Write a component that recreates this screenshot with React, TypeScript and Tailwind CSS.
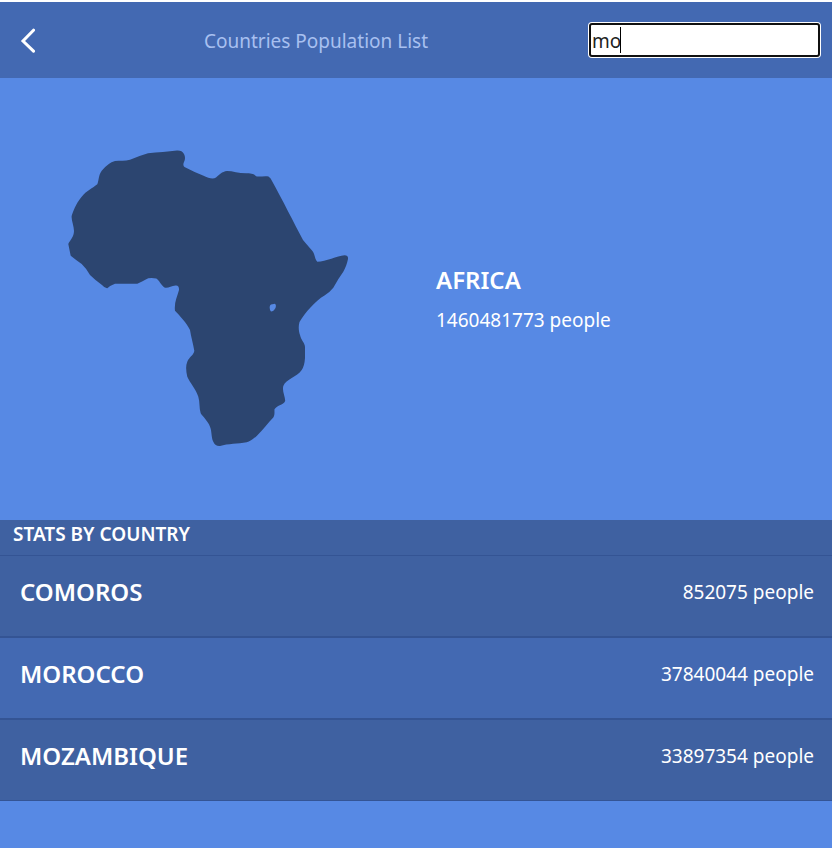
import { useState } from "react";

const countries = [
  { name: "COMOROS", population: 852075 },
  { name: "MOROCCO", population: 37840044 },
  { name: "MOZAMBIQUE", population: 33897354 },
];

function BackIcon() {
  return (
    <svg width="16" height="26" viewBox="0 0 16 26" fill="none" stroke="white" strokeWidth="3" strokeLinecap="round" strokeLinejoin="miter" aria-hidden="true">
      <path d="M13.5 3.200L3 14L13.5 24.200" />
    </svg>
  );
}

function AfricaMap() {
  return (
    <svg className="w-[281px] max-w-full" viewBox="68 150 281 297" role="img" aria-label="Map of Africa">
      <path
        fill="#2c4570"
        fillRule="evenodd"
        d="M148 153.3C158 152 168 152 177 150.6Q182 150.3 184 154Q186 158 184 162Q182.500 165 184.500 167Q194 172 203 175.500Q212 180 216 177.500C219 175 222 171.500 227 171C233 171 239 173.500 247 173.300C252 173.500 254 174 256 176.300C260 177 265 175.500 268.500 176.500Q271 178 272 181C282 199 294 223 303 240C307 245 311 249 313 251.700C315 255 315 260 317.300 261.700C326 261.500 337 256 344.500 255.200Q348.500 255.300 348 259C347 264 345.500 268 343.300 271.700Q338 279 333.300 287.700Q330 292 324.500 295.500C315 301 305 313 299.500 322C298 327 299 332 300 335C301 340 305 343 305 347V358Q304.500 366 301.700 370C297 377 286 379 283.300 386C282 391 285 396 285.200 400.700C284 405 277 405 274.500 409.300C274.300 412 275 415 273.300 417.500C268 423 263 430 256.700 436Q251 441 246.700 442.300C238 444 228 443.500 220 446Q215.500 446.500 213.300 441.700C211 437 212 431 210 426.700C208 421 203 417 200.700 413.300C199 408 200 402 198.300 396.700C196 389 190 383 187.300 376.700C186 371 185.500 366 187.300 361.700C189 357 194 355 194.300 350.700C193 343 191 337 190 330C187 323 179 315 175 310.700C174 303 177 297 179 290Q179.300 285 175.500 285.500C171 286 168 288.500 164.500 287.500C161 285 159 280 156.300 278.500Q152 277.600 148.300 278.300C144 280 141 282.500 137.300 283.700H115Q110 285.500 107.300 288.300Q105 288.500 102 285Q95 280 90 275Q86 268 81.700 264Q76 260 70.700 255.700Q69.500 250 68.300 244C70 240 74 237 74 231C74 226 71 220 71.700 215.700C74 208 78 201 81.700 196.700C86 191 93 188 97.300 184.300C99 180 98.500 175 101.700 170.700Q108 163 115 161C120 160.500 125 161 130 159.700Q139 156 148 153.300ZM271 304.500L275 303.700Q276.500 305 275.500 308Q273.500 311.500 271 311.500Q269 309 270 305.500Z"
      />
    </svg>
  );
}

export default function App() {
  const [query, setQuery] = useState("mo");
  const visible = countries.filter((c) => c.name.toLowerCase().includes(query.toLowerCase()));

  return (
    <div className="min-h-screen border-t-2 border-white bg-[#5789e4] font-['Noto_Sans','Open_Sans',sans-serif] text-[19px] leading-7 text-white">
      <header className="flex h-[76px] items-center justify-between bg-[#4369b2] pl-5 pr-[11px]">
        <button type="button" aria-label="Back" className="cursor-pointer">
          <BackIcon />
        </button>
        <p className="pt-0.5 pl-2 text-[#a8c0f0]">Countries Population List</p>
        <div className="relative">
          <input
            type="text"
            aria-label="Search countries"
            autoFocus
            value={query}
            onChange={(e) => setQuery(e.target.value)}
            className="block h-9 w-[233px] rounded-[4px] bg-white pt-0.5 pl-1 text-[#222] caret-transparent outline-2 -outline-offset-3 outline-[#101010]"
          />
          <div aria-hidden="true" className="pointer-events-none absolute inset-y-0 left-1 flex items-center">
            <span className="invisible">{query}</span>
            <span className="-ml-px h-[26px] w-px bg-black" />
          </div>
        </div>
      </header>

      <main>
        <section className="grid h-[442px] grid-cols-2 items-center">
          <div className="flex justify-center pb-0.5">
            <AfricaMap />
          </div>
          <div className="pl-5">
            <h1 className="mb-2.5 text-2xl font-semibold">AFRICA</h1>
            <p>1460481773 people</p>
          </div>
        </section>

        <section>
          <h2 className="h-[35px] bg-[#3f61a1] px-[13px] font-semibold">STATS BY COUNTRY</h2>
          <ul>
            {visible.map((c) => (
              <li
                key={c.name}
                className="flex h-[82px] items-center justify-between border-y border-[#345494] bg-[#4369b2] pb-2 pl-5 pr-[18px] odd:bg-[#3f61a1]"
              >
                <h3 className="text-2xl font-semibold">{c.name}</h3>
                <p>{c.population} people</p>
              </li>
            ))}
          </ul>
        </section>
      </main>
    </div>
  );
}
